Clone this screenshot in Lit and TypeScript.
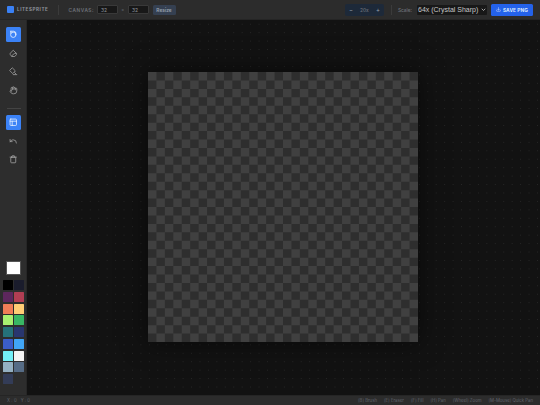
import { LitElement, html, css, svg } from "lit";
import { customElement } from "lit/decorators.js";

const palette = [
  "#000000", "#1a1c2c",
  "#5d275d", "#b13e53",
  "#ef7d57", "#ffcd75",
  "#a7f070", "#38b764",
  "#257179", "#29366f",
  "#3b5dc9", "#41a6f6",
  "#73eff7", "#f4f4f4",
  "#94b0c2", "#566c86",
  "#333c57",
];

const ic = (body: unknown) => html`<svg class="ico" viewBox="0 0 24 24" fill="none" stroke="currentColor" stroke-width="2.2" stroke-linecap="round" stroke-linejoin="round">${body}</svg>`;

const icons = {
  brush: svg`<path d="M5 3.5h8a7 7 0 0 1 7 7"/><path d="M5 3.5V9"/><circle cx="12" cy="13.5" r="7.5"/>`,
  eraser: svg`<path d="M7.5 20.5 3 15a2 2 0 0 1 .2-2.7L12 3.5l8.5 8.5a3 3 0 0 1 .5 4l-4 4.5z"/><path d="M8 20.5c2-5 5-8 12-8.5"/>`,
  fill: svg`<path d="m10 3 8 8-7.5 7.5-8-8z"/><path d="m16 16 3 3"/><path d="M12 21.5h10"/>`,
  hand: svg`<path d="M18 11V6a2 2 0 0 0-4 0"/><path d="M14 10V4a2 2 0 0 0-4 0v2"/><path d="M10 10.5V6a2 2 0 0 0-4 0v8"/><path d="M18 8a2 2 0 1 1 4 0v6a8 8 0 0 1-8 8h-2c-2.8 0-4.5-.9-5.9-2.4L3.4 16a2 2 0 0 1 2.8-2.8L8 15"/>`,
  layout: svg`<rect x="3" y="3" width="18" height="18" rx="2"/><path d="M3 9h18"/><path d="M9 21V9"/>`,
  undo: svg`<path d="M3 7v6h6"/><path d="M21 17a9 9 0 0 0-9-9 9 9 0 0 0-6 2.3L3 13"/>`,
  trash: svg`<path d="M3 6h18"/><rect x="5" y="6" width="14" height="16" rx="2"/><path d="M8 6V4a2 2 0 0 1 2-2h4a2 2 0 0 1 2 2v2"/>`,
  download: svg`<path d="M21 15v4a2 2 0 0 1-2 2H5a2 2 0 0 1-2-2v-4"/><path d="m7 10 5 5 5-5"/><path d="M12 15V3"/>`,
};

const cells = (() => {
  let d = "";
  for (let y = 0; y < 32; y++) {
    for (let x = 0; x < 32; x++) {
      if ((x + y) % 2 === 1) d += `M${x} ${y}h1v1h-1z`;
    }
  }
  return d;
})();

@customElement("app-root")
export class AppRoot extends LitElement {
  static styles = css`
    :host {
      display: flex;
      flex-direction: column;
      width: 540px;
      height: 405px;
      overflow: hidden;
      background: #121212;
      font-family: Inter, "Liberation Sans", sans-serif;
      color: #9ca3af;
    }
    .top {
      height: 20px;
      flex: none;
      box-sizing: border-box;
      background: #2d2d2d;
      border-bottom: 1px solid #262626;
      display: flex;
      align-items: center;
      padding: 0 0 0 6.5px;
      opacity: 0.995;
    }
    .brand { display: flex; align-items: center; gap: 3.5px; width: 51.5px; flex: none; }
    .logo { width: 7px; height: 7px; background: #3b82f6; border-radius: 1px; flex: none; }
    .brand-name { font-size: 4.6px; letter-spacing: 0.55px; font-weight: 700; color: #8e939b; white-space: nowrap; }
    .sep { width: 1px; height: 10px; background: #3c3c3c; flex: none; }
    .group { display: flex; align-items: center; margin-left: 9.5px; }
    .label { font-size: 4.8px; color: #6e727a; font-weight: 600; letter-spacing: 0.55px; white-space: nowrap; }
    .num {
      width: 20.5px; height: 9.5px; box-sizing: border-box;
      background: #191919; border: 0.5px solid #3a3a3a;
      border-radius: 1px; font-size: 5px; color: #8e939b; flex: none;
      display: flex; align-items: center; padding-left: 3px;
    }
    .canvas-label { width: 28.5px; flex: none; }
    .x { font-size: 4.5px; color: #6b7280; width: 10.5px; text-align: center; flex: none; }
    .resize {
      height: 10px; width: 23px; margin-left: 4px; flex: none;
      background: #364152; border-radius: 1.5px; font-size: 4.8px; font-weight: 600; color: #9aa3af;
      display: flex; align-items: center; justify-content: center;
    }
    .spacer { flex: 1; }
    .zoom {
      display: flex; align-items: center; justify-content: space-between;
      width: 39px; height: 12px; padding: 0 4px; box-sizing: border-box; flex: none;
      background: #1e2a3a; border-radius: 2px; font-size: 6px; color: #9aa3af;
    }
    .zoom b { color: #6e727a; font-weight: 500; font-size: 4.8px; }
    .zoom-sep { margin: 0 6px 0 7px; }
    .scale { display: flex; align-items: center; gap: 5px; margin-right: 4px; }
    .scale .label { font-weight: 500; letter-spacing: 0; }
    .sel {
      width: 70px; height: 10px; box-sizing: border-box; background: #191919; border-radius: 1px;
      font-size: 7px; color: #c8c8c8; display: flex; align-items: center; justify-content: space-between;
      padding: 0 1px 0 1px; white-space: nowrap; flex: none;
      font-family: "Liberation Sans", sans-serif;
    }
    .sel svg { width: 5px; height: 5px; flex: none; }
    .save {
      width: 42px; height: 12px; background: #2563eb; border-radius: 1.5px; flex: none; margin-right: 7px;
      color: #dbeafe; font-size: 4.8px; font-weight: 700; letter-spacing: 0.1px; white-space: nowrap;
      display: flex; align-items: center; justify-content: center; gap: 2px;
    }
    .save .ico { width: 5px; height: 5px; }
    .main { flex: 1; display: flex; min-height: 0; }
    .side {
      width: 27px; flex: none; box-sizing: border-box; background: #2d2d2d;
      border-right: 1px solid #262626;
      display: flex; flex-direction: column; align-items: center; padding: 7px 0 10.5px 1px;
    }
    .tool {
      width: 15px; height: 15px; border-radius: 1.5px; flex: none; color: #a3a3a3;
      display: flex; align-items: center; justify-content: center; margin-bottom: 3.6px;
    }
    .tool.on { background: #3b82f6; color: #eff6ff; }
    .ico { width: 8.5px; height: 8.5px; display: block; }
    .rule { width: 14px; height: 1px; background: #444; margin: 6.5px 0 6px; flex: none; }
    .grow { flex: 1; }
    .current { width: 15px; height: 14px; background: #ffffff; border: 1px solid #555; box-sizing: border-box; margin-bottom: 5px; flex: none; }
    .pal { display: grid; grid-template-columns: 10px 10px; grid-auto-rows: 10px; gap: 1.75px; }
    .pal i { display: block; border-radius: 0.5px; }
    .stage {
      flex: 1; min-width: 0;
      background-color: #121212;
      background-image: radial-gradient(#272727 0.5px, transparent 0.8px);
      background-size: 8.4375px 8.4375px;
      display: flex; align-items: center; justify-content: center;
    }
    .art {
      width: 270px; height: 270px; flex: none; display: block; margin-right: 1px;
      box-shadow: 0 0 24px rgba(0, 0, 0, 0.55);
    }
    .foot {
      height: 10.5px; flex: none; box-sizing: border-box; background: #2d2d2d;
      border-top: 1px solid #262626;
      display: flex; align-items: center; padding: 0 7px; font-size: 4.3px; color: #62666e;
      opacity: 0.995;
    }
    .xyz { letter-spacing: 1.4px; }
    .hints { margin-left: auto; display: flex; gap: 7px; white-space: nowrap; }
  `;

  render() {
    return html`
      <div class="top">
        <div class="brand"><div class="logo"></div><span class="brand-name">LITESPRITE</span></div>
        <div class="sep"></div>
        <div class="group">
          <span class="label canvas-label">CANVAS:</span>
          <div class="num">32</div><span class="x">×</span><div class="num">32</div>
          <div class="resize">Resize</div>
        </div>
        <div class="spacer"></div>
        <div class="zoom"><span>−</span><b>20x</b><span>+</span></div>
        <div class="sep zoom-sep"></div>
        <div class="scale">
          <span class="label">Scale:</span>
          <div class="sel"><span>64x (Crystal Sharp)</span>
            <svg viewBox="0 0 10 10" fill="none" stroke="currentColor" stroke-width="1.6"><path d="M1.5 3.5 5 7l3.5-3.5"/></svg>
          </div>
        </div>
        <div class="save">${ic(icons.download)}<span>SAVE PNG</span></div>
      </div>
      <div class="main">
        <div class="side">
          <div class="tool on">${ic(icons.brush)}</div>
          <div class="tool">${ic(icons.eraser)}</div>
          <div class="tool">${ic(icons.fill)}</div>
          <div class="tool">${ic(icons.hand)}</div>
          <div class="rule"></div>
          <div class="tool on">${ic(icons.layout)}</div>
          <div class="tool">${ic(icons.undo)}</div>
          <div class="tool">${ic(icons.trash)}</div>
          <div class="grow"></div>
          <div class="current"></div>
          <div class="pal">${palette.map((c) => html`<i style="background:${c}"></i>`)}</div>
        </div>
        <div class="stage">
          <svg class="art" viewBox="0 0 32 32"><rect width="32" height="32" fill="#404040"/><path d="${cells}" fill="#2e2e2e"/></svg>
        </div>
      </div>
      <div class="foot">
        <span class="xyz">X:0 Y:0</span>
        <div class="hints">
          <span>[B] Brush</span><span>[E] Eraser</span><span>[F] Fill</span><span>[H] Pan</span><span>[Wheel] Zoom</span><span>[M-Mouse] Quick Pan</span>
        </div>
      </div>
    `;
  }
}
